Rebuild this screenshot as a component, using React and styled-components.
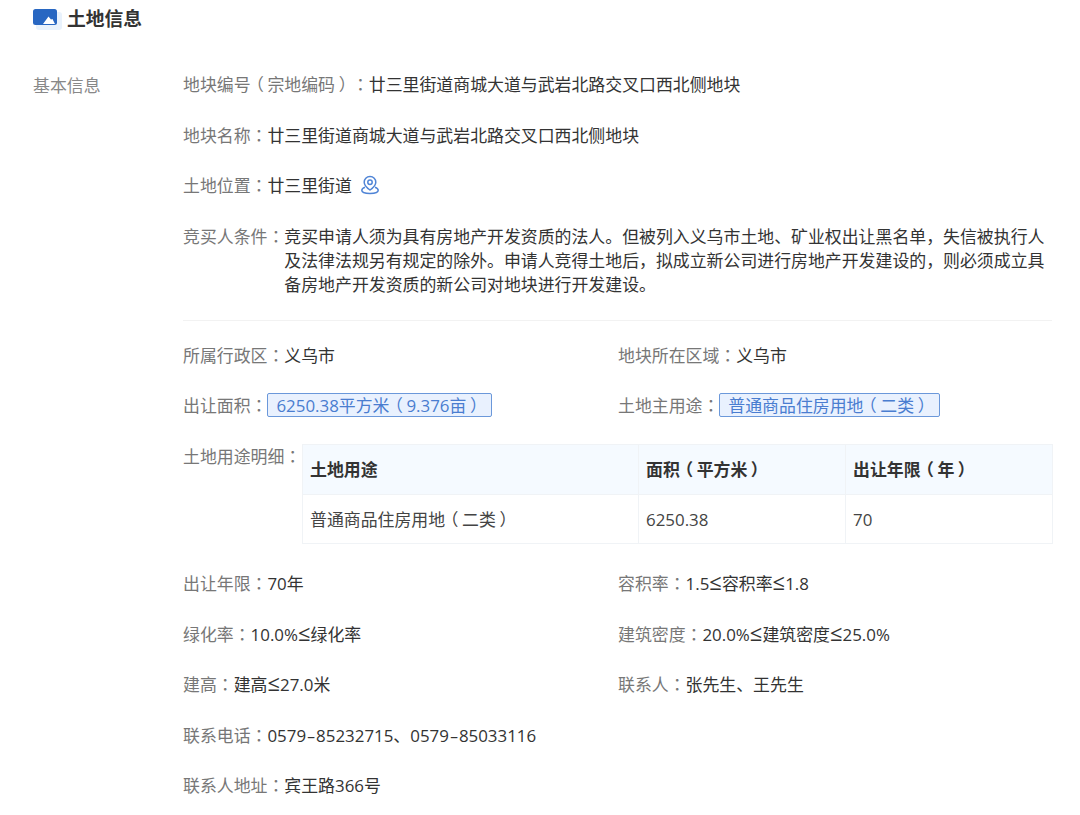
import React from 'react'
import styled, { createGlobalStyle } from 'styled-components'

const GlobalStyle = createGlobalStyle`
    html, body {
        margin: 0;
        padding: 0;
        background: #fff;
    }
    body {
        font-family: "Open Sans", "Noto Sans CJK SC", sans-serif;
        font-size: 16.9px;
        line-height: 24px;
        color: #333;
        text-spacing-trim: space-all;
    }
`
const Page = styled.div`
    width: 1080px;
    height: 815px;
    overflow: hidden;
    box-sizing: border-box;
    padding: 7px 28px 0 33px;
`
const Header = styled.div`
    display: flex;
    align-items: center;
    height: 24px;
    gap: 5px;
`
const Title = styled.h2`
    margin: 0;
    font-size: 18.8px;
    line-height: 24px;
    font-weight: 700;
    color: #333;
`
const Section = styled.div`
    display: flex;
    margin-top: 42px;
`
const SectionName = styled.div`
    width: 150px;
    flex-shrink: 0;
    padding-top: 1px;
    color: #888;
`
const Body = styled.div`
    flex: 1;
    min-width: 0;
`
const Row = styled.div`
    display: flex;
    align-items: flex-start;
    margin-bottom: 26.5px;
`
const Grid = styled.div`
    display: grid;
    grid-template-columns: 435px 1fr;
`
const Label = styled.span`
    flex-shrink: 0;
    color: #777;
`
const Value = styled.span`
    color: #333;
`
const Colon = styled.span`
    font-family: "Noto Sans CJK TC", sans-serif;
    line-height: 0;
`
const Paren = styled.span`
    display: inline-block;
    width: 1em;
    text-align: center;
    font-feature-settings: "palt";
`
const LessEqual = styled.span`
    font-size: 1.3em;
    line-height: 0;
`
const Hyphen = styled.span`
    display: inline-block;
    width: 10px;
    text-align: center;
    transform: scaleX(1.6);
`
const Pin = styled.svg`
    width: 20px;
    height: 20px;
    margin: 1px 0 0 8px;
    flex-shrink: 0;
`
const Divider = styled.div`
    height: 1px;
    background: #f2f2f2;
    margin: -3.5px 0 23px;
`
const Tag = styled.span`
    display: inline-block;
    box-sizing: border-box;
    height: 24px;
    margin-top: -1px;
    padding: 0 8px;
    border: 1px solid #6b98da;
    border-radius: 2px;
    background: #e9f1fe;
    color: #4a7dd0;
    line-height: 24px;
`
const DetailRow = styled.div`
    display: flex;
    align-items: flex-start;
    margin: -1px 0 28.5px;
`
const DetailLabel = styled(Label)`
    width: 119px;
    padding-top: 1px;
`
const Table = styled.table`
    width: 750px;
    border-collapse: collapse;
    table-layout: fixed;
`
const Th = styled.th`
    width: ${props => props.$width}px;
    height: 50px;
    padding: 2px 7px 0;
    box-sizing: border-box;
    text-align: left;
    font-weight: 700;
    background: #f5faff;
    border: 1px solid #f0f3f6;
    border-bottom: 0;
    color: #333;
`
const Td = styled.td`
    height: 49px;
    padding: 2px 7px 0;
    box-sizing: border-box;
    border: 1px solid #f0f3f6;
    color: #444;
`

// YaHei sets these glyphs differently from Noto, so they get their own spans
const Rich = ({ children }) =>
  children.split(/([（）≤-])/).map((part, i) => {
    if (part === '（' || part === '）') return <Paren key={i}>{part}</Paren>
    if (part === '≤') return <LessEqual key={i}>{part}</LessEqual>
    if (part === '-') return <Hyphen key={i}>{part}</Hyphen>
    return part
  })

const LandIcon = () => (
  <svg width="29" height="21" viewBox="0 0 29 21" style={{ display: 'block' }}>
    <rect x="3" y="3" width="26" height="18" rx="3" fill="#e9f2fc" />
    <rect x="0" y="0" width="24" height="16" rx="2.5" fill="#2867c2" />
    <path d="M10 15 L15.5 7.5 L18 10.5 L19.5 10 L22 15 Z" fill="#fff" />
  </svg>
)

const PinIcon = () => (
  <Pin viewBox="0 0 20 20" fill="none" stroke="#4f84d6" strokeWidth="1.5">
    <path d="M10 1.6 C6.5 1.6 4.2 4.2 4.2 7.2 C4.2 10.4 7.6 13.3 10 15 C12.4 13.3 15.8 10.4 15.8 7.2 C15.8 4.2 13.5 1.6 10 1.6 Z" />
    <circle cx="10" cy="7.3" r="2.2" />
    <path d="M5 12.2 C3 13 1.8 14.1 1.8 15.2 C1.8 17.2 5.6 18.4 10 18.4 C14.4 18.4 18.2 17.2 18.2 15.2 C18.2 14.1 17 13 15 12.2" />
  </Pin>
)

const Field = ({ label, value, children }) => (
  <Row>
    <Label><Rich>{label}</Rich><Colon>：</Colon></Label>
    {value ? <Value><Rich>{value}</Rich></Value> : children}
  </Row>
)

const App = () => {
  return (
    <Page>
      <GlobalStyle />
      <Header>
        <LandIcon />
        <Title>土地信息</Title>
      </Header>
      <Section>
        <SectionName>基本信息</SectionName>
        <Body>
          <Field label="地块编号（宗地编码）" value="廿三里街道商城大道与武岩北路交叉口西北侧地块" />
          <Field label="地块名称" value="廿三里街道商城大道与武岩北路交叉口西北侧地块" />
          <Field label="土地位置">
            <Value>廿三里街道</Value>
            <PinIcon />
          </Field>
          <Field
            label="竞买人条件"
            value="竞买申请人须为具有房地产开发资质的法人。但被列入义乌市土地、矿业权出让黑名单，失信被执行人及法律法规另有规定的除外。申请人竞得土地后，拟成立新公司进行房地产开发建设的，则必须成立具备房地产开发资质的新公司对地块进行开发建设。"
          />
          <Divider />
          <Grid>
            <Field label="所属行政区" value="义乌市" />
            <Field label="地块所在区域" value="义乌市" />
            <Field label="出让面积">
              <Tag><Rich>6250.38平方米（9.376亩）</Rich></Tag>
            </Field>
            <Field label="土地主用途">
              <Tag><Rich>普通商品住房用地（二类）</Rich></Tag>
            </Field>
          </Grid>
          <DetailRow>
            <DetailLabel>土地用途明细<Colon>：</Colon></DetailLabel>
            <Table>
              <thead>
                <tr>
                  <Th $width={336}>土地用途</Th>
                  <Th $width={207}><Rich>面积（平方米）</Rich></Th>
                  <Th $width={207}><Rich>出让年限（年）</Rich></Th>
                </tr>
              </thead>
              <tbody>
                <tr>
                  <Td><Rich>普通商品住房用地（二类）</Rich></Td>
                  <Td>6250.38</Td>
                  <Td>70</Td>
                </tr>
              </tbody>
            </Table>
          </DetailRow>
          <Grid>
            <Field label="出让年限" value="70年" />
            <Field label="容积率" value="1.5≤容积率≤1.8" />
            <Field label="绿化率" value="10.0%≤绿化率" />
            <Field label="建筑密度" value="20.0%≤建筑密度≤25.0%" />
            <Field label="建高" value="建高≤27.0米" />
            <Field label="联系人" value="张先生、王先生" />
          </Grid>
          <Field label="联系电话" value="0579-85232715、0579-85033116" />
          <Field label="联系人地址" value="宾王路366号" />
        </Body>
      </Section>
    </Page>
  )
}

export default App
